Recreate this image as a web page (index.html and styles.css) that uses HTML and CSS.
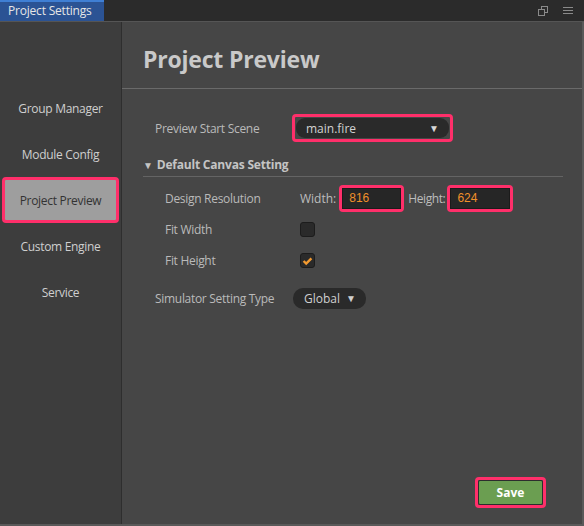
FILE: index.html
```html
<!DOCTYPE html>
<html>
<head>
<meta charset="utf-8">
<link rel="stylesheet" href="styles.css">
</head>
<body>
<div class="window">
  <div class="tabbar">
    <div class="tab">Project Settings</div>
    <div class="tab-tools">
      <svg class="tool" width="12" height="12" viewBox="0 0 12 12"><rect x="4.5" y="1.5" width="6" height="6" fill="none" stroke="#8a8a8a"/><rect x="1.5" y="4.5" width="6" height="6" fill="#2b2b2b" stroke="#8a8a8a"/></svg>
      <svg class="tool" width="12" height="12" viewBox="0 0 12 12"><path d="M1 2.5h10M1 5.5h10M1 8.5h10" stroke="#8a8a8a" stroke-width="1"/></svg>
    </div>
  </div>
  <div class="main">
    <div class="sidebar">
      <div class="nav">Group Manager</div>
      <div class="nav">Module Config</div>
      <div class="nav active">Project Preview</div>
      <div class="nav">Custom Engine</div>
      <div class="nav">Service</div>
    </div>
    <div class="content">
      <h1 class="title">Project Preview</h1>
      <div class="body">
        <div class="row">
          <span class="label">Preview Start Scene</span>
          <div class="hl hl-select"><div class="select"><span>main.fire</span><span class="arrow">▼</span></div></div>
        </div>
        <div class="section"><span class="caret">▼</span>Default Canvas Setting</div>
        <div class="sub">
          <div class="row r2">
            <span class="label">Design Resolution</span>
            <span class="pre">Width:</span>
            <div class="hl hl-input"><div class="input">816</div></div>
            <span class="pre pre2">Height:</span>
            <div class="hl hl-input hl-input2"><div class="input">624</div></div>
          </div>
          <div class="row r3 first">
            <span class="label">Fit Width</span>
            <div class="check"></div>
          </div>
          <div class="row r3">
            <span class="label">Fit Height</span>
            <div class="check"><svg width="14" height="14" viewBox="0 0 14 14"><path d="M2.8 7l2.8 2.8L11.2 4.2" fill="none" stroke="#f39a30" stroke-width="2.6"/></svg></div>
          </div>
        </div>
        <div class="row r4">
          <span class="label">Simulator Setting Type</span>
          <div class="pill">Global<span class="arrow2">▼</span></div>
        </div>
      </div>
      <div class="footer">
        <div class="hl hl-btn"><div class="btn">Save</div></div>
      </div>
    </div>
  </div>
</div>
</body>
</html>
```
FILE: styles.css
```css
* { box-sizing: border-box; }
html, body { margin: 0; padding: 0; background: #3a3a3a; }
body { width: 584px; height: 526px; overflow: hidden; font-family: "Open Sans", "Noto Sans", sans-serif; font-size: 12px; color: #bdbdbd; }
.window { width: 584px; height: 526px; display: flex; flex-direction: column; }
.tabbar { height: 22px; background: #2b2b2b; display: flex; align-items: stretch; border-bottom: 1px solid #555; }
.tab { width: 104px; background: #2b5394; border-top: 2px solid #3f7fd4; color: #e6e6e6; padding-left: 8px; line-height: 18px; font-size: 12px; letter-spacing: -0.2px; }
.tab-tools { margin-left: auto; display: flex; align-items: center; gap: 13px; padding-right: 10px; }
.tool { display: block; }
.main { flex: 1; display: flex; border-bottom: 2px solid #595959; border-right: 2px solid #595959; }
.sidebar { width: 122px; background: #3d3d3d; border-right: 1px solid #2e2e2e; padding-top: 63px; padding-left: 2px; padding-right: 2px; }
.nav { height: 46px; display: flex; align-items: center; justify-content: center; color: #cfcfcf; font-size: 12px; letter-spacing: -0.3px; }
.nav.active { background: #9e9e9e; color: #333; border: 3px solid #ff2f6a; border-radius: 4px; }
.content { flex: 1; background: #464646; display: flex; flex-direction: column; }
.title { margin: 0; height: 67px; border-bottom: 1px solid #6a6a6a; font-size: 23px; font-weight: 700; color: #c9c9c9; padding-left: 21px; padding-top: 23px; line-height: 28px; letter-spacing: -0.2px; }
.body { padding-left: 21px; padding-right: 19px; padding-top: 25px; }
.row { display: flex; align-items: center; }
.label { color: #bababa; letter-spacing: -0.3px; }
.row > .label { width: 149px; padding-left: 12px; }
.hl { border: 3px solid #ff2f6a; border-radius: 4px; }
.hl-select { width: 161px; height: 28px; padding: 1px; }
.select { height: 100%; background: #2a2a2a; border-radius: 9px; display: flex; align-items: center; justify-content: space-between; padding: 0 10px 0 10px; color: #d2d2d2; }
.arrow { font-size: 10px; color: #d8d8d8; }
.section { margin-top: 13px; height: 22px; border-bottom: 1px solid #646464; font-weight: 700; color: #c4c4c4; display: flex; align-items: center; letter-spacing: -0.2px; padding-bottom: 2px; }
.caret { font-size: 10px; margin-right: 4px; color: #c4c4c4; }
.sub { padding-left: 10px; margin-top: 7px; }
.sub .row > .label { width: 147px; padding-left: 12px; }
.r2 { height: 28px; }
.pre { margin-right: 3px; }
.pre2 { margin-left: 4px; margin-right: 2px; letter-spacing: -0.4px; }
.hl-input { width: 65px; height: 27px; padding: 0; }
.hl-input2 { width: 66px; }
.input { height: 100%; background: #262626; border: 1px solid #1b1b1b; color: #f0902a; padding-left: 6px; display: flex; align-items: center; font-family: "Liberation Sans", sans-serif; font-size: 12px; }
.r3 { height: 31px; }
.r3.first { margin-top: 2px; }
.check { width: 15px; height: 15px; background: #2a2a2a; border: 1px solid #1c1c1c; border-radius: 3px; display: flex; align-items: center; justify-content: center; }
.check svg { display: block; }
.r4 { margin-top: 9px; height: 26px; }
.row.r4 > .label { width: 150px; }
.pill { height: 21px; background: #2a2a2a; border-radius: 10px; padding: 0 10px 0 11px; display: flex; align-items: center; color: #d0d0d0; }
.arrow2 { font-size: 10px; margin-left: 6px; }
.footer { margin-top: auto; display: flex; justify-content: flex-end; padding-right: 36px; padding-bottom: 16px; }
.hl-btn { width: 71px; height: 31px; padding: 0; }
.btn { height: 100%; background: #6b9e51; border: 1px solid #2d2d2d; border-radius: 2px; color: #fff; font-weight: 700; display: flex; align-items: center; justify-content: center; font-size: 12px; }
```
